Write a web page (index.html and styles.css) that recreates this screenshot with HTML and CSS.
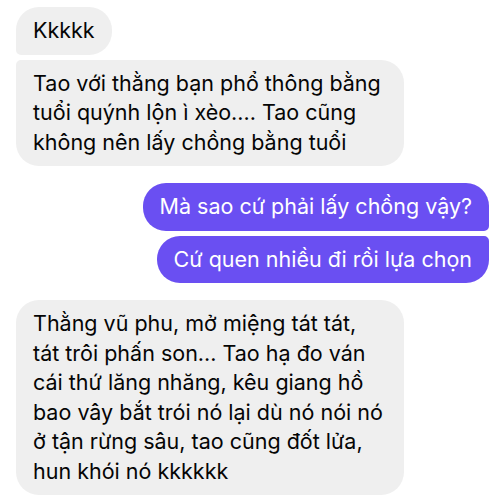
FILE: index.html
```html
<!DOCTYPE html>
<html lang="vi">
<head>
    <meta charset="UTF-8">
    <meta name="viewport" content="width=device-width, initial-scale=1.0">
    <title>Chat</title>
    <link rel="stylesheet" href="styles.css">
</head>
<body>
    <div class="chat">
        <div class="group incoming">
            <div class="bubble first">Kkkkk</div>
            <div class="bubble last wide">Tao với thằng bạn phổ thông bằng<br>tuổi quýnh lộn ì xèo.... Tao cũng<br>không nên lấy chồng bằng tuổi</div>
        </div>

        <div class="group outgoing">
            <div class="bubble first">Mà sao cứ phải lấy chồng vậy?</div>
            <div class="bubble last">Cứ quen nhiều đi rồi lựa chọn</div>
        </div>

        <div class="group incoming">
            <div class="bubble wide">Thằng vũ phu, mở miệng tát tát,<br>tát trôi phấn son... Tao hạ đo ván<br>cái thứ lăng nhăng, kêu giang hồ<br>bao vây bắt trói nó lại dù nó nói nó<br>ở tận rừng sâu, tao cũng đốt lửa,<br>hun khói nó kkkkkk</div>
        </div>
    </div>
</body>
</html>
```

FILE: styles.css
```css
body {
    margin: 0;
    padding: 0;
    background-color: #ffffff;
    font-family: 'Inter', 'Noto Sans', sans-serif;
    color: #000000;
}

.chat {
    display: flex;
    flex-direction: column;
    gap: 17px;
    padding: 7px 12px 0 16px;
}

.group {
    display: flex;
    flex-direction: column;
    gap: 5px;
}

.incoming {
    align-items: flex-start;
}

.outgoing {
    align-items: flex-end;
}

.bubble {
    font-size: 21.5px;
    line-height: 29.5px;
    padding: 9px 17px;
    border-radius: 23px;
    white-space: nowrap;
}

.incoming .bubble {
    background-color: #efefef;
    color: #050505;
}

.outgoing .bubble {
    background-color: #6a4ff2;
    color: #ffffff;
}

.bubble.wide {
    width: 354px;
}

.incoming .bubble.first {
    border-bottom-left-radius: 5px;
}

.incoming .bubble.last {
    border-top-left-radius: 5px;
}

.outgoing .bubble.first {
    border-bottom-right-radius: 5px;
}

.outgoing .bubble.last {
    border-top-right-radius: 5px;
}
```
